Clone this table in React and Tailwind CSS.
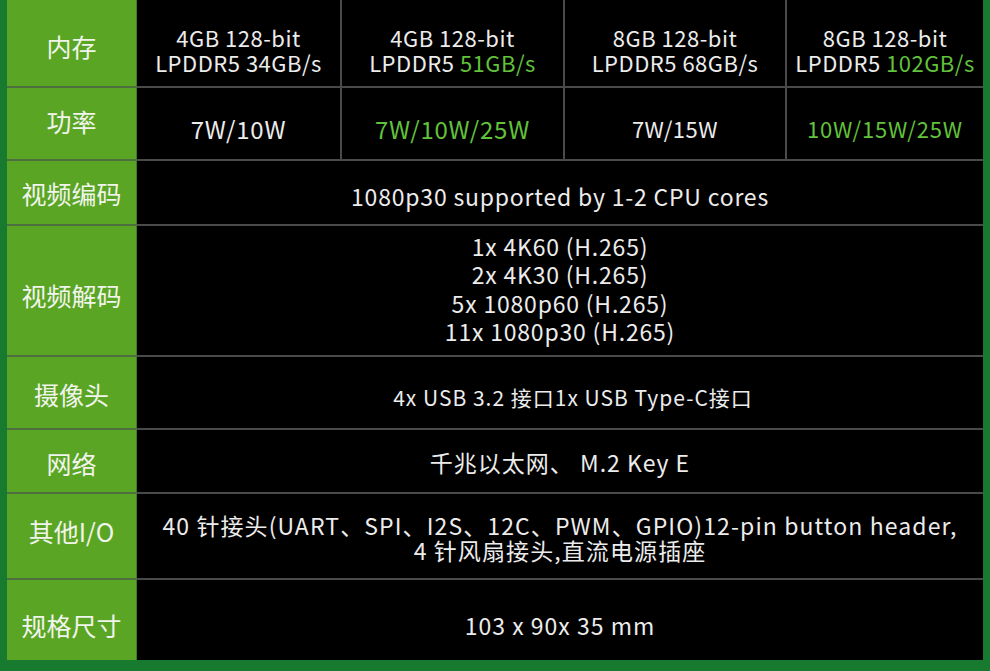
import React from 'react';

const font = { fontFamily: '"Noto Sans CJK SC", "Noto Sans", sans-serif' };

const G = ({ children }) => <span className="text-[#62c23c]">{children}</span>;

const Label = ({ children, last, className = '' }) => (
  <div
    className={`flex items-center justify-center bg-[#5aa624] text-[25px] text-[#f1f4ec] border-r border-[#3f7d1e] ${last ? '' : 'border-b-2 border-b-[#4d6e3e]'} ${className}`}
  >
    {children}
  </div>
);

const Cell = ({ children, span, last, first, className = '' }) => (
  <div
    className={`flex items-center justify-center text-center ${span ? 'col-span-4' : ''} ${first ? '' : 'border-l-2 border-l-[#4a4a4a]'} ${last ? '' : 'border-b-2 border-b-[#4a4a4a]'} ${className}`}
  >
    {children}
  </div>
);

const App = () => {
  return (
    <div className="w-[990px] h-[671px] bg-[#177a2e] px-[7px] pb-[11px] overflow-hidden" style={font}>
      <div className="grid grid-cols-[130px_203px_223px_222px_1fr] grid-rows-[88px_73px_65px_131px_73px_64px_86px_80px] h-[660px] bg-black text-[#ececec]">
        <Label className="pt-[8px]">内存</Label>
        <Cell first className="text-[22px] tracking-[0.5px] leading-[25px] pt-[14px]">
          <div>4GB 128-bit<br />LPDDR5 34GB/s</div>
        </Cell>
        <Cell className="text-[22px] tracking-[0.5px] leading-[25px] pt-[14px]">
          <div>4GB 128-bit<br />LPDDR5 <G>51GB/s</G></div>
        </Cell>
        <Cell className="text-[22px] tracking-[0.5px] leading-[25px] pt-[14px]">
          <div>8GB 128-bit<br />LPDDR5 68GB/s</div>
        </Cell>
        <Cell className="text-[22px] tracking-[0.5px] leading-[25px] pt-[14px]">
          <div>8GB 128-bit<br />LPDDR5 <G>102GB/s</G></div>
        </Cell>

        <Label className="pb-[4px]">功率</Label>
        <Cell first className="text-[24px] tracking-[0.8px] pt-[10px]">7W/10W</Cell>
        <Cell className="text-[24px] tracking-[0.8px] pt-[10px]"><G>7W/10W/25W</G></Cell>
        <Cell className="text-[22px] tracking-[0.5px] pt-[10px]">7W/15W</Cell>
        <Cell className="text-[22px] tracking-[0.8px] pt-[10px]"><G>10W/15W/25W</G></Cell>

        <Label className="pt-[2px]">视频编码</Label>
        <Cell span first className="text-[23px] tracking-[0.8px] pt-[8px]">1080p30 supported by 1-2 CPU cores</Cell>

        <Label className="pt-[10px]">视频解码</Label>
        <Cell span first className="text-[23px] tracking-[0.8px] leading-[28.5px] pb-[4px]">
          <div>
            1x 4K60 (H.265)<br />
            2x 4K30 (H.265)<br />
            5x 1080p60 (H.265)<br />
            11x 1080p30 (H.265)
          </div>
        </Cell>

        <Label className="pt-[4px]">摄像头</Label>
        <Cell span first className="text-[21px] tracking-[1px] pt-[10px] pl-[26px]">4x USB 3.2 接口1x USB Type-C接口</Cell>

        <Label className="pt-[6px]">网络</Label>
        <Cell span first className="text-[23px] tracking-[1px] pt-[2px]">千兆以太网、 M.2 Key E</Cell>

        <Label className="pb-[8px]">其他I/O</Label>
        <Cell span first className="text-[23px] tracking-[1.1px] leading-[25px] pt-[4px]">
          <div>
            40 针接头(UART、SPI、I2S、12C、PWM、GPIO)12-pin button header,<br />
            4 针风扇接头,直流电源插座
          </div>
        </Cell>

        <Label last className="pt-[12px]">规格尺寸</Label>
        <Cell span first last className="text-[23px] tracking-[1px] pt-[10px]">103 x 90x 35 mm</Cell>
      </div>
    </div>
  );
};

export default App;
